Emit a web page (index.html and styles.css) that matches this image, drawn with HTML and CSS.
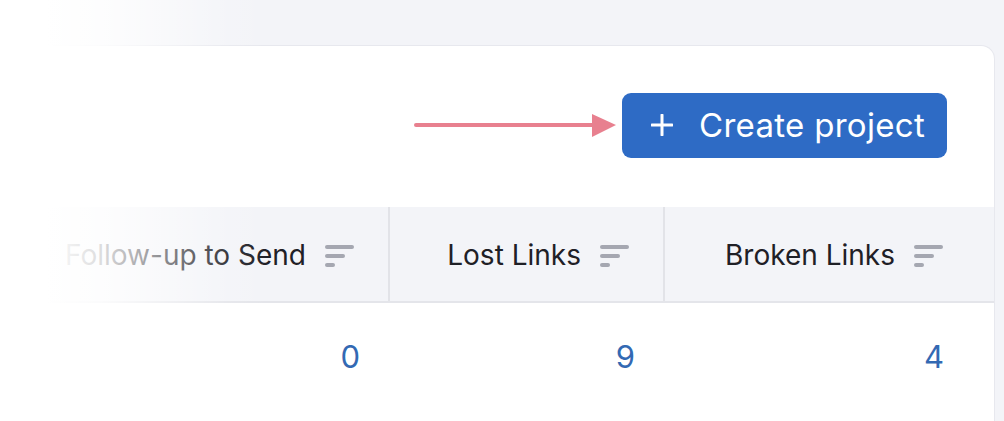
FILE: index.html
```html
<!DOCTYPE html>
<html lang="en">
<head>
<meta charset="utf-8">
<link rel="stylesheet" href="styles.css">
</head>
<body>
<div class="page">
  <div class="card">
    <div class="toolbar">
      <svg class="arrow" width="204" height="26" viewBox="0 0 204 26">
        <line x1="2" y1="12" x2="182" y2="12" stroke="#e8808f" stroke-width="4" stroke-linecap="round"/>
        <polygon points="178,1 202,12 178,24" fill="#e8808f"/>
      </svg>
      <button class="btn">
        <svg class="plus" width="22" height="22" viewBox="0 0 22 22"><path d="M11 1v20M1 11h20" stroke="#fff" stroke-width="3" stroke-linecap="round"/></svg>
        <span>Create project</span>
      </button>
    </div>
    <div class="table">
      <div class="row head">
        <div class="cell c1"><span>Follow-up to Send</span><i class="sort"><b></b><b></b><b></b></i></div>
        <div class="cell c2"><span>Lost Links</span><i class="sort"><b></b><b></b><b></b></i></div>
        <div class="cell c3"><span>Broken Links</span><i class="sort"><b></b><b></b><b></b></i></div>
      </div>
      <div class="row body">
        <div class="cell c1 num">0</div>
        <div class="cell c2 num">9</div>
        <div class="cell c3 num">4</div>
      </div>
    </div>
  </div>
  <div class="fade"></div>
</div>
</body>
</html>
```
FILE: styles.css
```css
* { box-sizing: border-box; }
html, body { margin: 0; padding: 0; }
body {
  background: #f3f4f8;
  font-family: Inter, "Noto Sans", sans-serif;
  width: 1004px;
  height: 421px;
  overflow: hidden;
}
.page {
  position: relative;
  height: 421px;
  padding-top: 45px;
  overflow: hidden;
}
.card {
  margin-left: -20px;
  width: 1015px;
  height: 376px;
  background: #fff;
  border: 1px solid #e7e8ee;
  border-bottom: none;
  border-radius: 0 14px 0 0;
}
.toolbar {
  height: 161px;
  display: flex;
  align-items: center;
  justify-content: flex-end;
  padding-right: 47px;
  padding-bottom: 3px;
}
.arrow { margin-right: 4px; margin-top: 2px; }
.btn {
  height: 65px;
  width: 325px;
  border: none;
  border-radius: 9px;
  background: #2e6bc5;
  color: #fff;
  font-family: Inter, "Noto Sans", sans-serif;
  font-size: 33px;
  font-weight: 400;
  display: flex;
  align-items: center;
  padding: 0 0 0 29px;
  gap: 26px;
}
.btn span { letter-spacing: 0.3px; }
.table { display: flex; flex-direction: column; }
.row { display: grid; grid-template-columns: 409px 275px 330px; }
.head {
  height: 96px;
  background: #f3f4f8;
  border-bottom: 2px solid #e4e5ea;
}
.head .cell {
  display: flex;
  align-items: center;
  justify-content: flex-end;
  font-size: 28px;
  color: #1f2026;
  gap: 19px;
  padding-top: 2px;
}
.head .c1, .head .c2 { border-right: 2px solid #e2e3e8; }
.c1 { padding-right: 34px; }
.c2 { padding-right: 34px; }
.c3 { padding-right: 52px; }
.sort { display: flex; flex-direction: column; gap: 5px; width: 29px; margin-top: 1px; }
.sort b { display: block; height: 4px; border-radius: 2px; background: #a5a7b1; }
.sort b:nth-child(1) { width: 29px; }
.sort b:nth-child(2) { width: 20px; }
.sort b:nth-child(3) { width: 10px; }
.body { height: 100px; }
.num {
  display: flex;
  align-items: center;
  justify-content: flex-end;
  font-size: 31px;
  color: #3369b3;
  padding-top: 6px;
}
.body .c1 { padding-right: 30px; }
.body .c2 { padding-right: 30px; }
.body .c3 { padding-right: 51px; }
.fade {
  position: absolute;
  left: 0; top: 0;
  width: 300px; height: 421px;
  background: linear-gradient(to right, #fff 0, #fff 45px, rgba(255,255,255,0.85) 100px, rgba(255,255,255,0.45) 170px, rgba(255,255,255,0.1) 230px, rgba(255,255,255,0) 270px);
  pointer-events: none;
}
```
